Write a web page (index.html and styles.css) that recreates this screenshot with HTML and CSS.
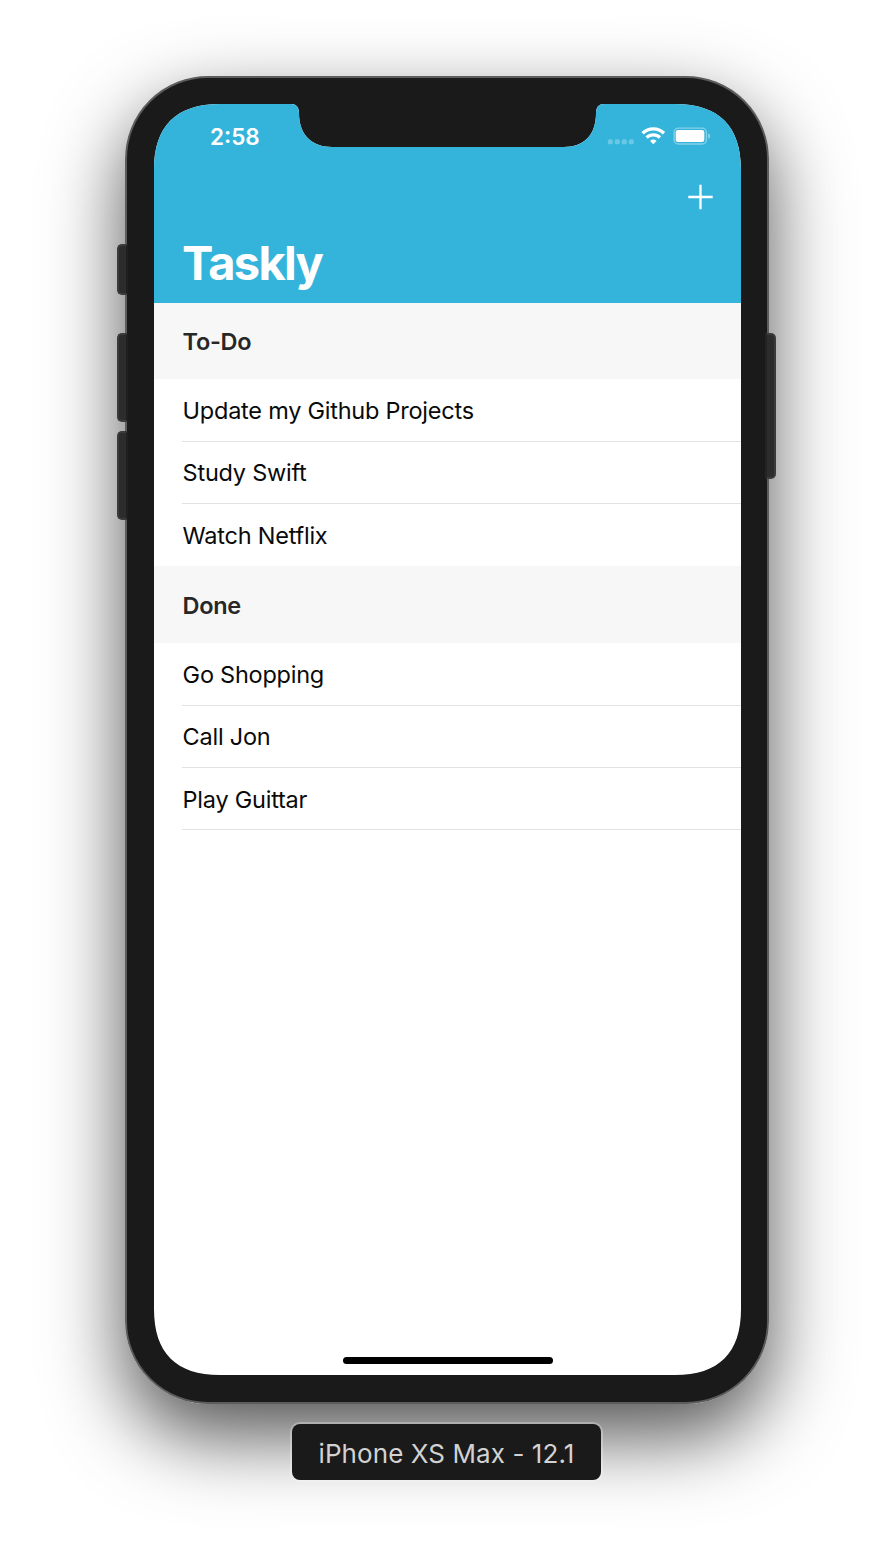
FILE: index.html
```html
<!DOCTYPE html>
<html lang="en">
<head>
<meta charset="utf-8">
<title>Taskly</title>
<link rel="stylesheet" href="styles.css">
</head>
<body>
<div class="device">
  <div class="bezel">
    <div class="screen">
      <header class="navbar">
        <div class="statusbar">
          <span class="clock">2:58</span>
          <svg class="status-icons" width="104" height="22" viewBox="0 0 104 22">
            <g fill="#fff" fill-opacity=".27">
              <rect x="0.8" y="13.3" width="5" height="5" rx="1.6"/>
              <rect x="7.8" y="13.3" width="5" height="5" rx="1.6"/>
              <rect x="14.8" y="13.3" width="5" height="5" rx="1.6"/>
              <rect x="21.8" y="13.3" width="5" height="5" rx="1.6"/>
            </g>
            <g fill="none" stroke="#fff" stroke-width="3.300">
              <path d="M35.600 7.300a15.300 15.300 0 0 1 21.400 0"/>
              <path d="M39.600 11.500a9.600 9.600 0 0 1 13.400 0"/>
            </g>
            <path fill="#fff" d="M43.100 14.900a4.500 4.500 0 0 1 6.400 0L46.300 18.300z"/>
            <rect x="67.1" y="2.1" width="32.3" height="15.900" rx="4.3" fill="none" stroke="#fff" stroke-opacity=".4" stroke-width="1.3"/>
            <rect x="68.700" y="3.900" width="28.600" height="12.2" rx="2.3" fill="#fff"/>
            <path d="M101.2 7.3c2.500 1 2.500 4.600 0 5.600z" fill="#fff" fill-opacity=".45"/>
          </svg>
        </div>
        <svg class="add" width="26" height="26" viewBox="0 0 26 26"><path d="M12.500 .8v24.400M.3 13h24.400" stroke="#fff" stroke-width="2.300"/></svg>
        <h1 class="title">Taskly</h1>
      </header>
      <h2 class="section">To-Do</h2>
      <ul class="tasks">
        <li class="task">Update my Github Projects</li>
        <li class="task">Study Swift</li>
        <li class="task last-plain">Watch Netflix</li>
      </ul>
      <h2 class="section section-done">Done</h2>
      <ul class="tasks">
        <li class="task">Go Shopping</li>
        <li class="task">Call Jon</li>
        <li class="task">Play Guittar</li>
      </ul>
      <div class="home-bar"></div>
    </div>
  </div>
  <i class="button button-mute"></i>
  <i class="button button-up"></i>
  <i class="button button-down"></i>
  <i class="button button-power"></i>
</div>
<div class="label">iPhone XS Max - 12.1</div>
</body>
</html>
```

FILE: styles.css
```css
* { box-sizing: border-box; }
body {
  margin: 0;
  height: 1552px;
  padding-top: 76px;
  display: flex;
  flex-direction: column;
  align-items: center;
  background: #fff;
  overflow: hidden;
  font-family: Inter, "Liberation Sans", sans-serif;
}
.device {
  position: relative;
  width: 644px;
  height: 1328px;
  flex: none;
  border-radius: 83px;
  box-shadow: 0 32px 78px rgba(0, 0, 0, .68);
}
.bezel {
  height: 100%;
  padding: 26px 26px 26px 27px;
  background: #1a1a1a;
  border: 2px solid #5c5c5e;
  border-radius: 83px;
}
.button {
  position: absolute;
  width: 11px;
  background: #2c2c2c;
  border: 2px solid #3b3b3b;
}
.button-mute, .button-up, .button-down {
  left: -8px;
  border-right-color: #1f1f1f;
  border-radius: 5px 2px 2px 5px;
}
.button-mute { top: 168px; height: 51px; }
.button-up { top: 257px; height: 89px; }
.button-down { top: 355px; height: 89px; }
.button-power {
  right: -7px;
  top: 257px;
  height: 146px;
  border-left-color: #242424;
  border-radius: 2px 5px 5px 2px;
}
.screen {
  width: 587px;
  height: 1271px;
  display: flex;
  flex-direction: column;
  background: #fff;
  clip-path: path("M0 66C0 22 22 0 66 0H137Q145 0 145 9C145 31 158 43 178 43H410C430 43 442 31 442 9Q442 0 450 0H521C565 0 587 22 587 66V1205C587 1249 565 1271 521 1271H66C22 1271 0 1249 0 1205Z");
}
.navbar {
  height: 199px;
  display: flex;
  flex-direction: column;
  background: #35b4db;
  color: #fff;
}
.statusbar {
  height: 80px;
  padding: 18px 30px 0 56px;
  display: flex;
  justify-content: space-between;
}
.clock { font-size: 22.500px; line-height: 29px; font-weight: 600; }
.status-icons { margin-top: 4px; }
.add { margin: 0 27px 0 auto; flex: none; }
.title {
  margin: 23px 0 0 28px;
  font-size: 47px;
  line-height: 60px;
  font-weight: 700;
  letter-spacing: -1.700px;
}
.section {
  margin: 0;
  height: 76px;
  padding: 0 28.500px;
  flex: none;
  background: #f7f7f7;
  color: #272727;
  font-size: 23.500px;
  line-height: 78px;
  font-weight: 600;
  letter-spacing: -.3px;
}
.section-done { height: 77px; line-height: 79px; }
.tasks { margin: 0; padding: 0 0 0 28px; list-style: none; }
.task {
  height: 62px;
  padding-left: .6px;
  border-bottom: 1px solid #e2e2e4;
  color: #0a0a0a;
  font-size: 23.500px;
  line-height: 62px;
  letter-spacing: -.24px;
}
.task:first-child { height: 63px; line-height: 63px; }
.task:last-child { line-height: 64px; }
.last-plain { border-bottom: 0; }
.home-bar {
  width: 210px;
  height: 7px;
  margin: auto auto 11px 188.500px;
  border-radius: 4px;
  background: #000;
}
.label {
  position: relative;
  width: 309px;
  height: 56px;
  margin: 20px 1px 0 0;
  flex: none;
  border-radius: 8px;
  background: #1a1a1a;
  box-shadow: 0 0 0 2px rgba(255, 255, 255, .28);
  color: #d2d2d2;
  text-align: center;
  font-size: 26px;
  line-height: 59px;
  letter-spacing: .08px;
}
```
